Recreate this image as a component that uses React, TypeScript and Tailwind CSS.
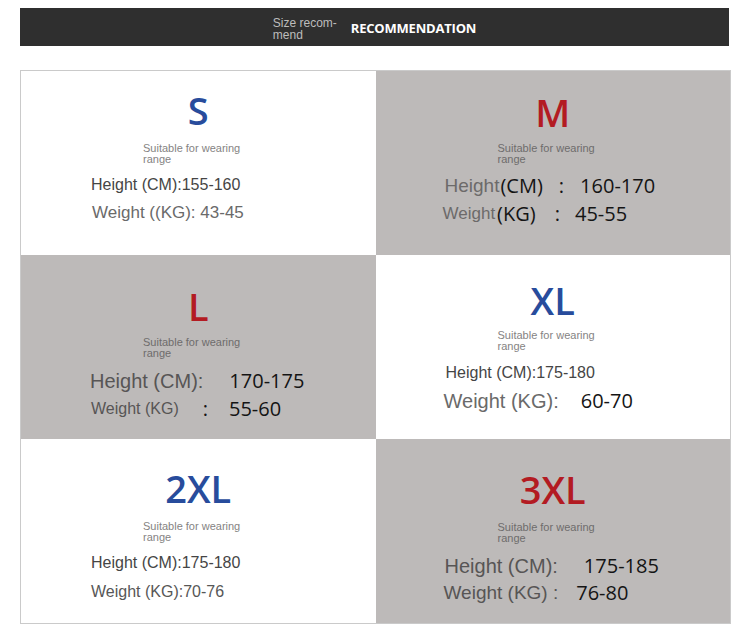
import React from "react";

type Seg = { t: string; c: string };

type Cell = {
    size: string;
    sizeColor: string;
    bg: string;
    pt: string;
    mt1: string;
    mt2: string;
    mt3: string;
    height: Seg[];
    weight: Seg[];
};

const arial = "font-['Liberation_Sans',Arial,sans-serif]";
const num = "font-['Open_Sans',sans-serif] text-[20px] text-[#141414]";

const cells: Cell[] = [
    {
        size: "S",
        sizeColor: "text-[#284c9c]",
        bg: "bg-white",
        pt: "pt-[20px]",
        mt1: "mt-[14px]",
        mt2: "mt-[8px]",
        mt3: "mt-[4px]",
        height: [{ t: "Height (CM):155-160", c: "ml-[70px] text-[16px] text-[#454545]" }],
        weight: [{ t: "Weight ((KG): 43-45", c: "ml-[71px] text-[17px] text-[#6a6a6a]" }],
    },
    {
        size: "M",
        sizeColor: "text-[#b31b22]",
        bg: "bg-[#bdbab9]",
        pt: "pt-[22px]",
        mt1: "mt-[12px]",
        mt2: "mt-[9px]",
        mt3: "mt-[4px]",
        height: [
            { t: "Height", c: "ml-[69px] text-[19px] text-[#6c6a6a]" },
            { t: "(CM)", c: "ml-[1px] " + num },
            { t: ":", c: "ml-[16px] " + num },
            { t: "160-170", c: "ml-[16px] " + num },
        ],
        weight: [
            { t: "Weight", c: "ml-[67px] text-[17px] text-[#6c6a6a]" },
            { t: "(KG)", c: "ml-[2px] " + num },
            { t: ":", c: "ml-[19px] " + num },
            { t: "45-55", c: "ml-[15px] " + num },
        ],
    },
    {
        size: "L",
        sizeColor: "text-[#b31b22]",
        bg: "bg-[#bdbab9]",
        pt: "pt-[32px]",
        mt1: "mt-[12px]",
        mt2: "mt-[10px]",
        mt3: "mt-[4px]",
        height: [
            { t: "Height (CM):", c: "ml-[69px] text-[20px] text-[#575555]" },
            { t: "170-175", c: "ml-[26px] " + num },
        ],
        weight: [
            { t: "Weight (KG)", c: "ml-[70px] text-[16px] text-[#575555]" },
            { t: ":", c: "ml-[24px] " + num },
            { t: "55-60", c: "ml-[21px] " + num },
        ],
    },
    {
        size: "XL",
        sizeColor: "text-[#284c9c]",
        bg: "bg-white",
        pt: "pt-[26px]",
        mt1: "mt-[11px]",
        mt2: "mt-[9px]",
        mt3: "mt-[4px]",
        height: [{ t: "Height (CM):175-180", c: "ml-[70px] text-[16px] text-[#454545]" }],
        weight: [
            { t: "Weight (KG):", c: "ml-[68px] text-[20px] text-[#6a6a6a]" },
            { t: "60-70", c: "ml-[22px] " + num },
        ],
    },
    {
        size: "2XL",
        sizeColor: "text-[#284c9c]",
        bg: "bg-white",
        pt: "pt-[30px]",
        mt1: "mt-[14px]",
        mt2: "mt-[8px]",
        mt3: "mt-[5px]",
        height: [{ t: "Height (CM):175-180", c: "ml-[70px] text-[16px] text-[#454545]" }],
        weight: [{ t: "Weight (KG):70-76", c: "ml-[70px] text-[16px] text-[#575757]" }],
    },
    {
        size: "3XL",
        sizeColor: "text-[#b31b22]",
        bg: "bg-[#bdbab9]",
        pt: "pt-[31px]",
        mt1: "mt-[14px]",
        mt2: "mt-[10px]",
        mt3: "mt-[3px]",
        height: [
            { t: "Height (CM):", c: "ml-[69px] text-[20px] text-[#575555]" },
            { t: "175-185", c: "ml-[26px] " + num },
        ],
        weight: [
            { t: "Weight (KG) :", c: "ml-[68px] text-[19px] text-[#575555]" },
            { t: "76-80", c: "ml-[18px] " + num },
        ],
    },
];

const SizeCell: React.FC<{ cell: Cell }> = ({ cell }) => {
    const sub = cell.bg === "bg-white" ? "text-[#858383]" : "text-[#6e6c6c]";
    return (
        <div className={`h-[184px] flex flex-col ${cell.bg} ${cell.pt}`}>
            <div
                className={`text-center text-[38px] leading-[38px] font-semibold font-['Open_Sans',sans-serif] ${cell.sizeColor}`}
            >
                {cell.size}
            </div>
            <div className={`ml-[122px] text-[11px] leading-[11px] ${sub} ${arial} ${cell.mt1}`}>
                <div>Suitable for wearing</div>
                <div>range</div>
            </div>
            <div className={`flex items-center h-[24px] whitespace-nowrap ${arial} ${cell.mt2}`}>
                {cell.height.map((s, i) => (
                    <span key={i} className={s.c}>
                        {s.t}
                    </span>
                ))}
            </div>
            <div className={`flex items-center h-[24px] whitespace-nowrap ${arial} ${cell.mt3}`}>
                {cell.weight.map((s, i) => (
                    <span key={i} className={s.c}>
                        {s.t}
                    </span>
                ))}
            </div>
        </div>
    );
};

export default function App() {
    return (
        <div className="w-[750px] h-[642px] bg-white pt-[8px]">
            <div className="ml-[20px] w-[709px] h-[38px] pt-[3px] bg-[#2f2f2f] flex items-center justify-center gap-[14px]">
                <div className={`text-[12px] leading-[12px] text-[#bdbdbd] ${arial}`}>
                    <div>Size recom-</div>
                    <div>mend</div>
                </div>
                <div className="text-[13px] font-bold text-white tracking-[-0.2px] font-['Open_Sans',sans-serif]">
                    RECOMMENDATION
                </div>
            </div>
            <div className="ml-[20px] mt-[24px] w-[711px] border border-[#cacaca] grid grid-cols-2">
                {cells.map((c) => (
                    <SizeCell key={c.size} cell={c} />
                ))}
            </div>
        </div>
    );
}
